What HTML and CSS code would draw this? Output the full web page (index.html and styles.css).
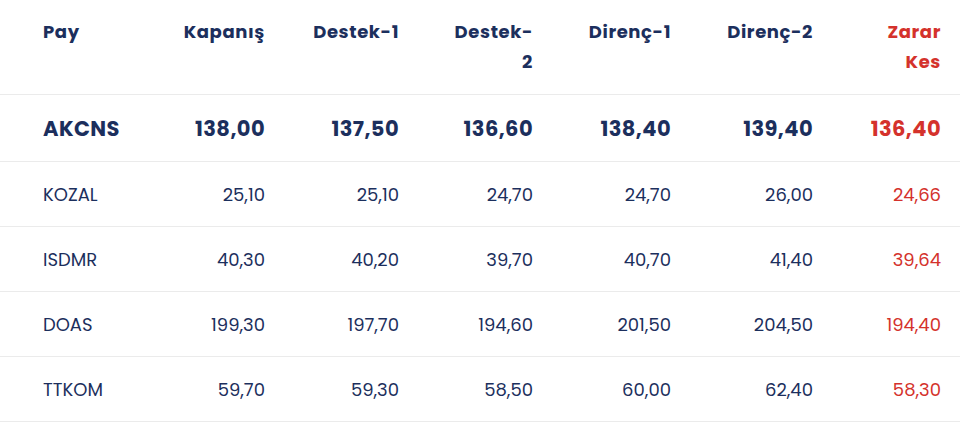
FILE: index.html
```html
<!DOCTYPE html>
<html lang="tr">
<head>
<meta charset="utf-8">
<title>Destek Direnç</title>
<link rel="stylesheet" href="styles.css">
</head>
<body>
<table class="levels">
  <colgroup>
    <col class="c-pay">
    <col class="c-134">
    <col class="c-134">
    <col class="c-134">
    <col class="c-138">
    <col class="c-142">
    <col class="c-128">
  </colgroup>
  <thead>
    <tr>
      <th class="left">Pay</th>
      <th>Kapanış</th>
      <th>Destek-1</th>
      <th>Destek-<br>2</th>
      <th>Direnç-1</th>
      <th>Direnç-2</th>
      <th class="stop">Zarar<br>Kes</th>
    </tr>
  </thead>
  <tbody>
    <tr class="featured">
      <td class="left">AKCNS</td><td>138,00</td><td>137,50</td><td>136,60</td><td>138,40</td><td>139,40</td><td class="stop">136,40</td>
    </tr>
    <tr>
      <td class="left">KOZAL</td><td>25,10</td><td>25,10</td><td>24,70</td><td>24,70</td><td>26,00</td><td class="stop">24,66</td>
    </tr>
    <tr>
      <td class="left">ISDMR</td><td>40,30</td><td>40,20</td><td>39,70</td><td>40,70</td><td>41,40</td><td class="stop">39,64</td>
    </tr>
    <tr>
      <td class="left">DOAS</td><td>199,30</td><td>197,70</td><td>194,60</td><td>201,50</td><td>204,50</td><td class="stop">194,40</td>
    </tr>
    <tr>
      <td class="left">TTKOM</td><td>59,70</td><td>59,30</td><td>58,50</td><td>60,00</td><td>62,40</td><td class="stop">58,30</td>
    </tr>
  </tbody>
</table>
</body>
</html>
```
FILE: styles.css
```css
html, body {
  margin: 0;
  padding: 0;
  background: #ffffff;
}
body {
  font-family: "Poppins", "Open Sans", "DejaVu Sans", sans-serif;
  color: #1c2f5d;
}
.levels {
  width: 960px;
  border-collapse: collapse;
  table-layout: fixed;
}
.c-pay { width: 150px; }
.c-134 { width: 134px; }
.c-138 { width: 138px; }
.c-142 { width: 142px; }
.c-128 { width: 128px; }

.levels th,
.levels td {
  text-align: right;
  padding: 0 19px;
}
.levels th.left,
.levels td.left {
  text-align: left;
  padding-left: 43px;
  padding-right: 0;
}
.levels th {
  vertical-align: top;
  font-size: 18px;
  font-weight: 700;
  letter-spacing: 0.6px;
  line-height: 30px;
  padding-top: 17px;
  padding-bottom: 16px;
  height: 61px;
}
.levels tr {
  border-bottom: 1px solid #ebebeb;
}
.levels td {
  height: 64px;
  font-size: 18px;
  font-weight: 400;
  vertical-align: middle;
}
.levels tr.featured td {
  height: 66px;
  font-size: 21px;
  font-weight: 700;
  letter-spacing: 0.4px;
}
.levels .stop {
  color: #d4322c;
}
```
